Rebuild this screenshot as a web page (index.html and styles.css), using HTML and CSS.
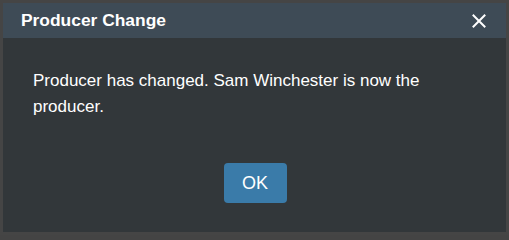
FILE: index.html
```html
<!DOCTYPE html>
<html>
<head>
<meta charset="utf-8">
<link rel="stylesheet" href="styles.css">
</head>
<body>
<div class="dialog">
  <div class="header">
    <span class="title">Producer Change</span>
    <span class="close" aria-label="close">
      <svg width="14" height="14" viewBox="0 0 14 14"><path d="M1.5 1.5 L12.5 12.5 M12.5 1.5 L1.5 12.5" stroke="#fff" stroke-width="2" stroke-linecap="square"/></svg>
    </span>
  </div>
  <div class="body">
    <p class="message">Producer has changed. Sam Winchester is now the producer.</p>
    <div class="actions"><button class="ok">OK</button></div>
  </div>
</div>
</body>
</html>
```
FILE: styles.css
```css
html, body { margin: 0; padding: 0; }
body { width: 509px; height: 235px; background: #444; font-family: "Liberation Sans", Arial, sans-serif; }
.dialog { box-sizing: border-box; width: 509px; height: 235px; border: 3px solid #454545; background: #32373a; display: flex; flex-direction: column; }
.header { height: 35px; background: #3e4b56; display: flex; align-items: center; justify-content: space-between; padding: 0 20px 0 18px; }
.title { color: #fff; font-weight: bold; font-size: 17.4px; }
.close { display: flex; width: 14px; height: 14px; margin-top: 1px; }
.body { flex: 1; padding: 30px 30px 0 30px; color: #fff; }
.message { margin: 0; font-size: 17px; line-height: 26px; padding-right: 30px; }
.actions { display: flex; justify-content: center; margin-top: 43px; }
.ok { width: 63px; height: 40px; background: #3a7ba9; color: #fff; border: none; border-radius: 4px; font-family: "Liberation Sans", Arial, sans-serif; font-size: 18px; padding: 0; margin-left: 1px; }
```
